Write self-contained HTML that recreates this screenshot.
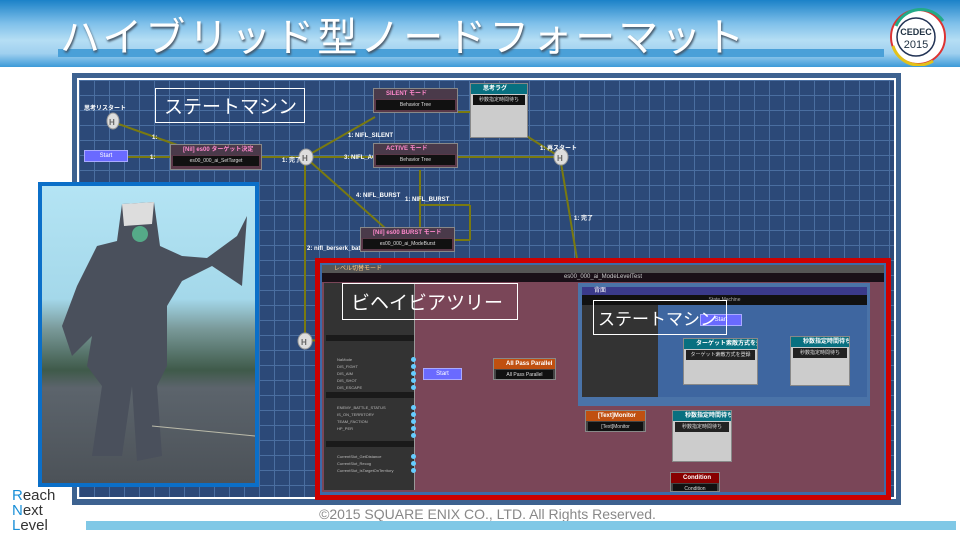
<!DOCTYPE html>
<html><head><meta charset="utf-8"><style>
*{margin:0;padding:0;box-sizing:border-box}
body{width:960px;height:540px;overflow:hidden;background:#fff;position:relative;font-family:"Liberation Sans","Noto Sans CJK JP",sans-serif}
.a{position:absolute}
.node{position:absolute;background:#5a3848;border:1px solid #888;overflow:hidden}
.nh{height:10px;font-size:6px;color:#fff;font-weight:bold;padding-left:12px;line-height:10px;white-space:nowrap;overflow:hidden}
.nb{height:10px;background:#111;margin:1px 2px;font-size:5px;color:#ddd;text-align:center;line-height:10px;white-space:nowrap;overflow:hidden}
.lbl{position:absolute;font-size:6px;color:#fff;font-weight:bold;white-space:nowrap}
.pl{position:absolute;font-size:4px;color:#bbb;white-space:nowrap}
.dot{position:absolute;width:5px;height:5px;border-radius:50%;background:#6cf}
</style></head><body>
<div class="a" style="left:0;top:0;width:960px;height:67px;background:linear-gradient(#1b82c8 0%,#7fc0ea 35%,#b5def4 60%,#9fd0ef 80%,#3c9ad8 100%)"></div>
<div class="a" style="left:58px;top:49px;width:826px;height:8px;background:#4aa0d8"></div>
<div class="a" style="left:60px;top:5px;font-size:40px;color:#fff;letter-spacing:3px;text-shadow:1px 2px 2px #456;white-space:nowrap">ハイブリッド型ノードフォーマット</div>
<svg class="a" style="left:888px;top:6px" width="70" height="60"><circle cx="30" cy="31" r="27" fill="#fff" stroke="#d33" stroke-width="2"/><path d="M8 20 A27 27 0 0 1 55 15" stroke="#2a8" stroke-width="3" fill="none"/><path d="M5 40 A27 27 0 0 0 45 55" stroke="#e3c21a" stroke-width="3" fill="none"/><circle cx="28" cy="31" r="19" fill="#fff" stroke="#235" stroke-width="1.5"/><text x="28" y="29" font-size="9" font-weight="bold" text-anchor="middle" fill="#234" font-family="Liberation Sans">CEDEC</text><text x="28" y="42" font-size="11" text-anchor="middle" fill="#234" font-family="Liberation Sans">2015</text></svg>
<div class="a" style="left:72px;top:73px;width:829px;height:432px;background:#3d6290"></div>
<div class="a" style="left:77px;top:78px;width:819px;height:421px;background:#fff"></div>
<div class="a" style="left:79px;top:80px;width:815px;height:417px;background-color:#2c4978;background-image:linear-gradient(#4a6ea0 1px,transparent 1px),linear-gradient(90deg,#4a6ea0 1px,transparent 1px);background-size:15px 15px"></div>
<svg class="a" style="left:0;top:0" width="960" height="540">
<g stroke="#7a7a10" stroke-width="2" fill="none">
<line x1="113" y1="122" x2="180" y2="146"/>
<line x1="128" y1="157" x2="170" y2="157"/>
<line x1="230" y1="157" x2="305" y2="157"/>
<line x1="305" y1="157" x2="375" y2="117"/>
<line x1="305" y1="157" x2="560" y2="157"/>
<line x1="305" y1="157" x2="385" y2="228"/>
<line x1="305" y1="157" x2="305" y2="340"/>
<line x1="458" y1="112" x2="470" y2="112"/>
<line x1="420" y1="170" x2="420" y2="228"/>
<line x1="455" y1="240" x2="470" y2="240"/>
<line x1="470" y1="240" x2="470" y2="205"/><line x1="470" y1="205" x2="420" y2="205"/>
<line x1="525" y1="135" x2="560" y2="157"/>
<line x1="560" y1="157" x2="578" y2="265"/>
<line x1="305" y1="340" x2="325" y2="341"/>
<line x1="445" y1="374" x2="495" y2="374"/>
<path d="M555 374 Q570 374 578 350 Q590 310 600 300"/>
<path d="M555 374 Q575 380 578 410 Q580 425 590 425"/>
<line x1="647" y1="424" x2="672" y2="424"/>
<path d="M647 424 Q665 430 667 460 Q670 482 672 482"/>
<line x1="758" y1="364" x2="790" y2="364"/>
<line x1="721" y1="325" x2="721" y2="338"/>
</g>
<g fill="#ddd" stroke="#999"><ellipse cx="113" cy="121" rx="6" ry="8"/><ellipse cx="306" cy="157" rx="7" ry="8"/><ellipse cx="561" cy="157" rx="7" ry="8"/><ellipse cx="305" cy="341" rx="7" ry="8"/></g>
<g fill="#666" font-size="8" font-weight="bold" font-family="Liberation Sans"><text x="109" y="125">H</text><text x="302" y="161">H</text><text x="557" y="161">H</text><text x="301" y="345">H</text></g>
</svg>
<div class="a" style="left:84px;top:150px;width:44px;height:12px;background:#6a6aff;border:1px solid #aaf;font-size:6px;color:#fff;text-align:center;line-height:10px">Start</div>
<div class="lbl" style="left:84px;top:103px">思考リスタート</div>
<div class="lbl" style="left:152px;top:135px">1:</div><div class="lbl" style="left:150px;top:155px">1:</div>
<div class="lbl" style="left:282px;top:155px">1: 完了</div>
<div class="lbl" style="left:348px;top:133px">1: NIFL_SILENT</div>
<div class="lbl" style="left:344px;top:155px">3: NIFL_ACTIVE</div>
<div class="lbl" style="left:356px;top:193px">4: NIFL_BURST</div>
<div class="lbl" style="left:405px;top:197px">1: NIFL_BURST</div>
<div class="lbl" style="left:307px;top:246px">2: nifl_berserk_battle</div>
<div class="lbl" style="left:574px;top:213px">1: 完了</div>
<div class="lbl" style="left:540px;top:143px">1: 再スタート</div>
<div class="node" style="left:170px;top:144px;width:92px;height:26px"><div class="nh" style="background:#4a3a4a;color:#f8c">[Nil] es00 ターゲット決定</div><div class="nb">es00_000_ai_SetTarget</div></div>
<div class="node" style="left:373px;top:88px;width:85px;height:25px"><div class="nh" style="background:#4a3a4a;color:#f8c">SILENT モード</div><div class="nb">Behavior Tree</div></div>
<div class="node" style="left:373px;top:143px;width:85px;height:25px"><div class="nh" style="background:#4a3a4a;color:#f8c">ACTIVE モード</div><div class="nb">Behavior Tree</div></div>
<div class="node" style="left:360px;top:227px;width:95px;height:25px"><div class="nh" style="background:#4a3a4a;color:#f8c">[Nil] es00 BURST モード</div><div class="nb">es00_000_ai_ModeBurst</div></div>
<div class="node" style="left:470px;top:83px;width:58px;height:55px;background:#ccc"><div class="nh" style="background:#087080">思考ラグ</div><div class="nb">秒数指定時間待ち</div></div>
<div class="a" style="left:155px;top:88px;width:150px;height:35px;border:1px solid #fff;color:#fff;font-size:19px;padding:3px 0 0 8px">ステートマシン</div>
<div class="a" style="left:38px;top:182px;width:221px;height:305px;background:#0b6fc8"></div>
<div class="a" style="left:42px;top:186px;width:213px;height:297px;background:linear-gradient(#b4e4f4 0%,#a4d8ea 38%,#7a9a9a 48%,#3f5a4a 62%,#5c646c 68%,#4c5258 100%)"></div>
<svg class="a" style="left:42px;top:186px" width="213" height="297"><g fill="#4a505c"><path d="M80 18 L112 16 L118 60 L140 70 L165 72 L195 50 L205 30 L200 100 L170 80 L140 95 L125 120 L125 180 L115 200 L120 270 L95 275 L90 200 L80 270 L50 270 L60 200 L45 180 L50 150 L30 170 L20 140 L35 100 L55 60 L75 55 Z"/></g><path d="M80 18 L112 16 L110 38 L82 40 Z" fill="#ddd"/><circle cx="98" cy="48" r="8" fill="#5a8"/><line x1="110" y1="240" x2="213" y2="250" stroke="#bba" stroke-width="1"/></svg>
<div class="a" style="left:315px;top:258px;width:576px;height:242px;background:#c00"></div>
<div class="a" style="left:320px;top:263px;width:566px;height:232px;background:#3c6aa8"></div>
<div class="a" style="left:322px;top:265px;width:562px;height:8px;background:#555;font-size:6px;color:#fc8;padding-left:12px;line-height:8px">レベル切替モード</div>
<div class="a" style="left:322px;top:273px;width:562px;height:219px;background:#7a4658"></div>
<div class="a" style="left:322px;top:273px;width:562px;height:9px;background:#1a1018;font-size:6px;color:#ccc;text-align:center;line-height:9px">es00_000_ai_ModeLevelTest</div>
<div class="a" style="left:324px;top:283px;width:91px;height:207px;background:#333;border-right:1px solid #999"></div>
<div class="a" style="left:326px;top:335px;width:88px;height:6px;background:#1a1a1a"></div>
<div class="a" style="left:326px;top:392px;width:88px;height:6px;background:#1a1a1a"></div>
<div class="a" style="left:326px;top:441px;width:88px;height:6px;background:#1a1a1a"></div>
<div class="dot" style="left:411px;top:357px"></div><div class="dot" style="left:411px;top:364px"></div><div class="dot" style="left:411px;top:371px"></div><div class="dot" style="left:411px;top:378px"></div><div class="dot" style="left:411px;top:385px"></div>
<div class="dot" style="left:411px;top:405px"></div><div class="dot" style="left:411px;top:412px"></div><div class="dot" style="left:411px;top:419px"></div><div class="dot" style="left:411px;top:426px"></div><div class="dot" style="left:411px;top:433px"></div>
<div class="dot" style="left:411px;top:454px"></div><div class="dot" style="left:411px;top:461px"></div><div class="dot" style="left:411px;top:468px"></div>
<div class="pl" style="left:337px;top:357px">NaMode</div><div class="pl" style="left:337px;top:364px">DIS_FIGHT</div><div class="pl" style="left:337px;top:371px">DIS_AIM</div><div class="pl" style="left:337px;top:378px">DIS_SHOT</div><div class="pl" style="left:337px;top:385px">DIS_ESCAPE</div>
<div class="pl" style="left:337px;top:405px">ENEMY_BATTLE_STATUS</div><div class="pl" style="left:337px;top:412px">IS_ON_TERRITORY</div><div class="pl" style="left:337px;top:419px">TEAM_FACTION</div><div class="pl" style="left:337px;top:426px">HP_PER</div>
<div class="pl" style="left:337px;top:454px">CurrentSlot_GetDistance</div><div class="pl" style="left:337px;top:461px">CurrentSlot_Recog</div><div class="pl" style="left:337px;top:468px">CurrentSlot_IsTargetOnTerritory</div>
<div class="a" style="left:342px;top:283px;width:176px;height:37px;border:1px solid #fff;color:#fff;font-size:19px;padding:4px 0 0 8px">ビヘイビアツリー</div>
<div class="a" style="left:423px;top:368px;width:39px;height:12px;background:#6a6aff;border:1px solid #aaf;font-size:6px;color:#fff;text-align:center;line-height:10px">Start</div>
<div class="node" style="left:493px;top:358px;width:63px;height:22px;background:#444"><div class="nh" style="background:#c05010">All Pass Parallel</div><div class="nb">All Pass Parallel</div></div>
<div class="node" style="left:585px;top:410px;width:61px;height:22px;background:#444"><div class="nh" style="background:#c05010">[Text]Monitor</div><div class="nb">[Text]Monitor</div></div>
<div class="node" style="left:672px;top:410px;width:60px;height:52px;background:#ccc"><div class="nh" style="background:#087080">秒数指定時間待ち</div><div class="nb" style="background:#222">秒数指定時間待ち</div></div>
<div class="node" style="left:670px;top:472px;width:50px;height:20px;background:#444"><div class="nh" style="background:#800">Condition</div><div class="nb">Condition</div></div>
<div class="a" style="left:578px;top:283px;width:292px;height:123px;background:#4a73a8"></div>
<div class="a" style="left:582px;top:287px;width:285px;height:8px;background:#3a3a8a;font-size:6px;color:#fff;padding-left:12px;line-height:8px">背面</div>
<div class="a" style="left:582px;top:295px;width:285px;height:10px;background:#111;font-size:5px;color:#aaa;text-align:center;line-height:10px">State Machine</div>
<div class="a" style="left:582px;top:305px;width:285px;height:92px;background:#3e66a0"></div>
<div class="a" style="left:582px;top:305px;width:76px;height:92px;background:#333"></div>
<div class="a" style="left:700px;top:314px;width:42px;height:12px;background:#6a6aff;border:1px solid #aaf;font-size:6px;color:#fff;text-align:center;line-height:10px">Start</div>
<div class="a" style="left:593px;top:300px;width:134px;height:35px;border:1px solid #fff;color:#fff;font-size:17px;padding:4px 0 0 4px;white-space:nowrap;overflow:hidden">ステートマシン</div>
<div class="node" style="left:683px;top:338px;width:75px;height:47px;background:#ccc"><div class="nh" style="background:#087080">ターゲット索敵方式を登録</div><div class="nb" style="background:#222">ターゲット索敵方式を登録</div></div>
<div class="node" style="left:790px;top:336px;width:60px;height:50px;background:#ccc"><div class="nh" style="background:#087080">秒数指定時間待ち</div><div class="nb" style="background:#222">秒数指定時間待ち</div></div>
<div class="a" style="left:0;top:506px;width:960px;text-align:center;font-size:14px;color:#888;padding-left:15px">©2015 SQUARE ENIX CO., LTD. All Rights Reserved.</div>
<div class="a" style="left:86px;top:521px;width:870px;height:9px;background:#80c8e6"></div>
<div class="a" style="left:12px;top:488px;font-size:15px;line-height:15px;color:#333;font-family:'Liberation Sans',sans-serif"><span style="color:#1a8fd8">R</span>each<br><span style="color:#1a8fd8">N</span>ext<br><span style="color:#1a8fd8">L</span>evel</div>
</body></html>
